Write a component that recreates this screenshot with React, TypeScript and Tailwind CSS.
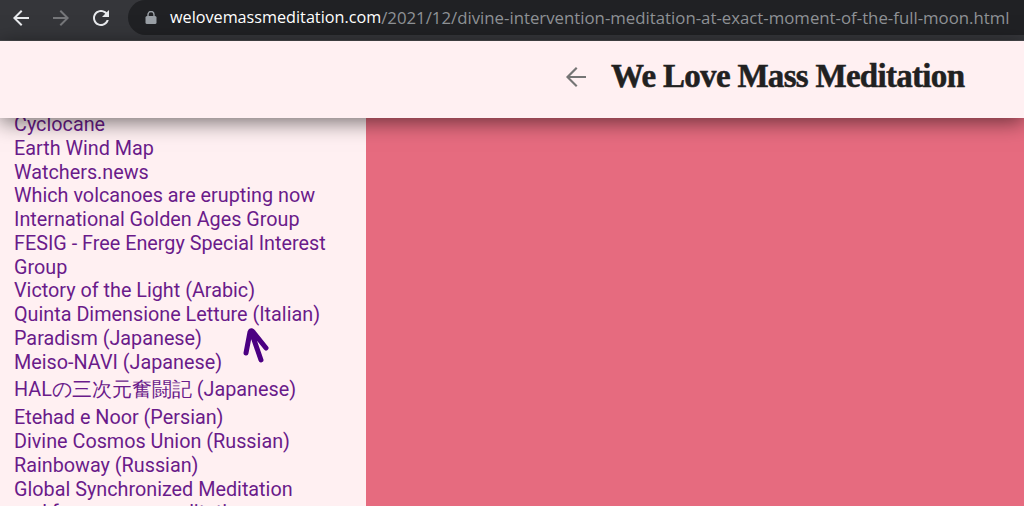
const links = [
  'Cyclocane',
  'Earth Wind Map',
  'Watchers.news',
  'Which volcanoes are erupting now',
  'International Golden Ages Group',
  'FESIG - Free Energy Special Interest Group',
  'Victory of the Light (Arabic)',
  'Quinta Dimensione Letture (Italian)',
  'Paradism (Japanese)',
  'Meiso-NAVI (Japanese)',
]

const linksAfter = [
  'Etehad e Noor (Persian)',
  'Divine Cosmos Union (Russian)',
  'Rainboway (Russian)',
  'Global Synchronized Meditation',
  'and free energy meditation',
]

function ToolbarIcon({ d, className }: { d: string; className: string }) {
  return (
    <svg width="24" height="24" viewBox="0 0 24 24" className={className} fill="currentColor">
      <path d={d} />
    </svg>
  )
}

export default function App() {
  return (
    <div className="flex h-[506px] w-[1024px] flex-col overflow-hidden font-['Roboto',sans-serif]">
      {/* Browser toolbar */}
      <div className="flex h-[41px] shrink-0 items-start border-b border-[#4a4b4e] bg-[#35363a] font-['Open_Sans',sans-serif]">
        <div className="flex h-[35px] w-[128px] shrink-0 items-center gap-[16px] pl-[9px]">
          <ToolbarIcon className="text-[#e8eaed]" d="M20 11H7.83l5.59-5.59L12 4l-8 8 8 8 1.41-1.41L7.83 13H20v-2z" />
          <ToolbarIcon className="text-[#76777a]" d="M12 4l-1.41 1.41L16.17 11H4v2h12.17l-5.58 5.59L12 20l8-8z" />
          <ToolbarIcon className="text-[#e8eaed]" d="M17.65 6.35C16.2 4.9 14.21 4 12 4c-4.42 0-7.99 3.58-7.99 8s3.57 8 7.99 8c3.73 0 6.84-2.55 7.73-6h-2.08c-.82 2.33-3.04 4-5.65 4-3.31 0-6-2.69-6-6s2.69-6 6-6c1.66 0 3.14.69 4.22 1.78L13 11h7V4l-2.35 2.35z" />
        </div>
        <div className="flex h-[35px] flex-1 items-center rounded-l-[18px] bg-[#202124] pl-[17px]">
          <svg width="12" height="13" viewBox="0 0 12 13" fill="none" className="mr-[13px] text-[#9aa0a6]">
            <rect x="0.5" y="5" width="11" height="8" rx="1.5" fill="currentColor" />
            <path d="M3 5.5V3.5a3 3 0 0 1 6 0v2" stroke="currentColor" strokeWidth="1.4" />
          </svg>
          <span className="whitespace-nowrap text-[16.2px] text-white">welovemassmeditation.com</span>
          <span className="whitespace-nowrap text-[16.8px] text-[#8f9296]">/2021/12/divine-intervention-meditation-at-exact-moment-of-the-full-moon.html</span>
        </div>
      </div>

      {/* Page header */}
      <div className="relative z-10 flex h-[77px] shrink-0 items-center bg-[#fff0f2] pb-[6px] pl-[561px] shadow-[0_4px_20px_rgba(0,0,0,0.55)]">
        <svg width="30" height="30" viewBox="0 0 24 24" fill="none" stroke="#757575" strokeWidth="1.7">
          <path d="M20 12H5.5M12.6 4.6 5.2 12l7.4 7.4" />
        </svg>
        <h1 className="ml-[20px] whitespace-nowrap font-['Liberation_Serif',serif] text-[33px] font-bold tracking-[-0.7px] text-[#212121] [-webkit-text-stroke:0.5px_#212121]">
          We Love Mass Meditation
        </h1>
      </div>

      <div className="flex min-h-0 flex-1">
        {/* Sidebar links */}
        <div className="relative w-[366px] shrink-0 overflow-hidden bg-[#fff0f2] pl-[14px] pr-[20px] text-[19.8px] leading-[23.76px] text-[#6a1b8a]">
          <ul className="-mt-[5px]">
            {links.map((link) => (
              <li key={link}>{link}</li>
            ))}
            <li className="leading-[32px]">HALの三次元奮闘記 (Japanese)</li>
            {linksAfter.map((link) => (
              <li key={link}>{link}</li>
            ))}
          </ul>
          {/* Hand-drawn arrow annotation */}
          <svg className="absolute left-[240px] top-[207px]" width="32" height="40" viewBox="0 0 32 40" fill="none">
            <path d="M6 28 L10 7 Q11 4 14 8 L26 23 M11 6 L21 35" stroke="#4b0082" strokeWidth="5" strokeLinecap="round" strokeLinejoin="round" />
          </svg>
        </div>
        <div className="flex-1 bg-[#e66b7f]" />
      </div>
    </div>
  )
}
